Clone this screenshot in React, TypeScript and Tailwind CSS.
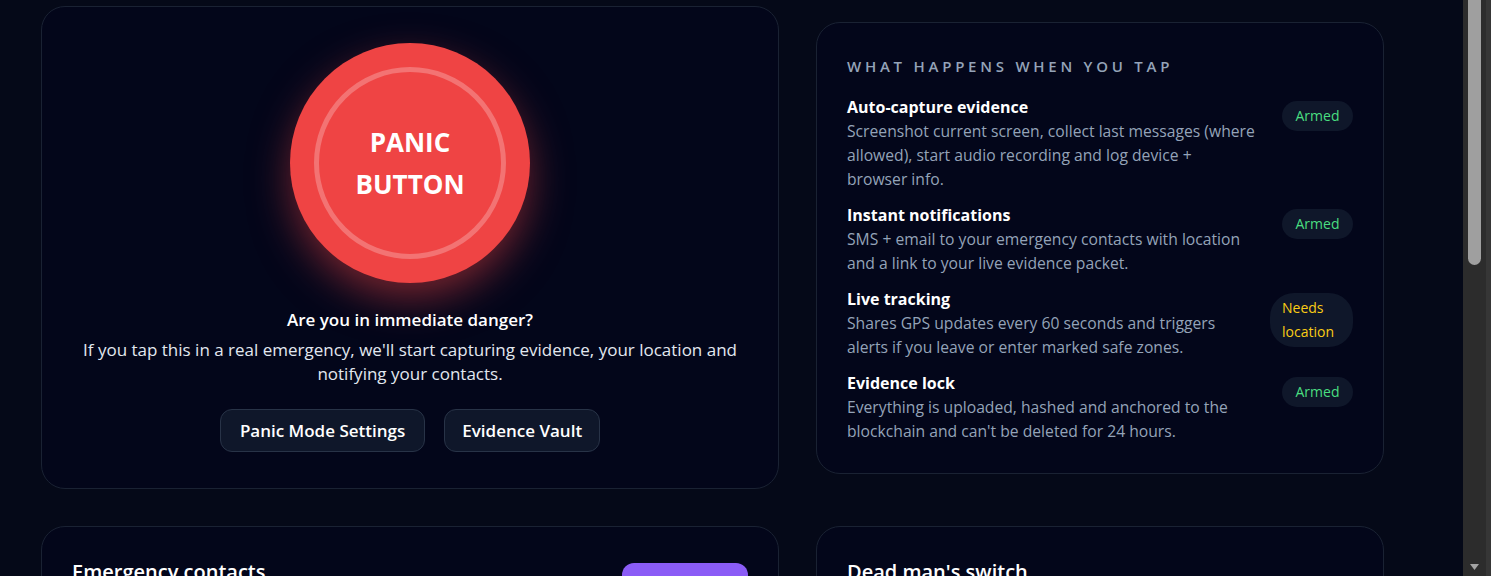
import { Phone, Mail, Plus, Timer } from 'lucide-react';

type Step = {
  title: string;
  desc: string;
  status: 'armed' | 'needs';
  label: string;
};

const steps: Step[] = [
  {
    title: 'Auto-capture evidence',
    desc: 'Screenshot current screen, collect last messages (where allowed), start audio recording and log device + browser\u00a0info.',
    status: 'armed',
    label: 'Armed',
  },
  {
    title: 'Instant notifications',
    desc: 'SMS + email to your emergency contacts with location and a link to your live evidence packet.',
    status: 'armed',
    label: 'Armed',
  },
  {
    title: 'Live tracking',
    desc: 'Shares GPS updates every 60 seconds and triggers alerts if you leave or enter marked safe zones.',
    status: 'needs',
    label: 'Needs location',
  },
  {
    title: 'Evidence lock',
    desc: "Everything is uploaded, hashed and anchored to the blockchain and can't be deleted for 24 hours.",
    status: 'armed',
    label: 'Armed',
  },
];

const contacts = [
  { name: 'Maya Thompson', relation: 'Sister', phone: '+1 (415) 555-0134', email: 'maya.t@example.com' },
  { name: 'Daniel Ortiz', relation: 'Friend', phone: '+1 (415) 555-0178', email: 'd.ortiz@example.com' },
  { name: 'Priya Nair', relation: 'Colleague', phone: '+1 (628) 555-0112', email: 'priya.nair@example.com' },
];

export default function App() {
  return (
    <div
      className="h-screen flex overflow-hidden bg-[#050918] text-slate-100"
      style={{ fontFamily: '"Open Sans", "Noto Sans", sans-serif' }}
    >
      <div className="flex-1 min-w-0 overflow-hidden pl-[41px] pt-[6px]">
        <div className="w-[1343px] grid grid-cols-[738px_568px] gap-x-[37px] gap-y-[37px] items-center">
          {/* Panic button card */}
          <div className="bg-[#03061a] border border-[#1a2233] rounded-3xl p-9 flex flex-col items-center">
            <button className="w-[240px] h-[240px] rounded-full bg-[#ef4444] flex items-center justify-center shadow-[0_16px_44px_-4px_rgba(239,68,68,0.55)] cursor-pointer">
              <div className="w-[192px] h-[192px] rounded-full border-[5px] border-white/25 flex items-center justify-center">
                <span className="text-white text-[26px] font-bold leading-[42px] text-center">
                  PANIC
                  <br />
                  BUTTON
                </span>
              </div>
            </button>

            <h3 className="mt-[25px] text-[17px] font-semibold text-white leading-6">Are you in immediate danger?</h3>
            <p className="mt-[6px] text-[17px] leading-6 text-[#e2e8f0] text-center">
              If you tap this in a real emergency, we'll start capturing evidence, your location and notifying your
              contacts.
            </p>

            <div className="mt-[23px] flex gap-[19px]">
              <button className="h-[43px] px-[19px] rounded-xl bg-[#0f172a] border border-[#283347] text-white text-[17px] font-semibold">
                Panic Mode Settings
              </button>
              <button className="h-[43px] px-[17px] rounded-xl bg-[#0f172a] border border-[#283347] text-white text-[17px] font-semibold">
                Evidence Vault
              </button>
            </div>
          </div>

          {/* What happens card */}
          <div className="bg-[#03061a] border border-[#1a2233] rounded-3xl p-[30px]">
            <h4 className="pt-[3px] text-[15px] font-semibold tracking-[0.25em] text-[#94a3b8] leading-5">
              WHAT HAPPENS WHEN YOU TAP
            </h4>
            <div className="mt-[19px] flex flex-col gap-3">
              {steps.map((s) => (
                <div key={s.title} className="flex items-start justify-between gap-5">
                  <div>
                    <div className="text-base font-bold text-white leading-6">{s.title}</div>
                    <div className="text-[15.7px] text-[#94a3b8] leading-6">{s.desc}</div>
                  </div>
                  <span
                    className={`mt-[6px] shrink-0 rounded-3xl bg-[#0f172a] px-3 py-[3px] text-sm leading-6 ${
                      s.status === 'armed' ? 'text-[#4ade80] w-[71px] text-center' : 'text-[#facc15] w-[83px]'
                    }`}
                  >
                    {s.label}
                  </span>
                </div>
              ))}
            </div>
          </div>

          {/* Emergency contacts */}
          <div className="self-start bg-[#03061a] border border-[#1a2233] rounded-3xl p-[30px]">
            <div className="flex items-start justify-between">
              <div>
                <h3 className="text-xl font-semibold text-white leading-7 pt-[1px]">Emergency contacts</h3>
                <p className="text-sm text-[#94a3b8] leading-6">These people are alerted the moment you tap.</p>
              </div>
              <button className="mt-[6px] h-[40px] w-[126px] rounded-xl bg-[#8b5cf6] text-white text-sm font-semibold flex items-center justify-center gap-1.5">
                <Plus className="w-4 h-4" />
                Add contact
              </button>
            </div>
            <div className="mt-6 flex flex-col gap-3">
              {contacts.map((c) => (
                <div key={c.name} className="rounded-2xl border border-[#1a2233] bg-[#0a1020] p-4 flex justify-between items-center">
                  <div>
                    <div className="text-base font-semibold text-white">{c.name}</div>
                    <div className="text-sm text-[#94a3b8]">{c.relation}</div>
                  </div>
                  <div className="text-sm text-slate-300 flex flex-col gap-1 items-end">
                    <span className="flex items-center gap-1.5"><Phone className="w-3.5 h-3.5" />{c.phone}</span>
                    <span className="flex items-center gap-1.5"><Mail className="w-3.5 h-3.5" />{c.email}</span>
                  </div>
                </div>
              ))}
            </div>
          </div>

          {/* Dead man's switch */}
          <div className="self-start bg-[#03061a] border border-[#1a2233] rounded-3xl p-[30px]">
            <h3 className="text-xl font-semibold text-white leading-7 pt-[1px]">Dead man's switch</h3>
            <p className="text-sm text-[#94a3b8] leading-6">
              If you don't check in before the timer ends, Panic Mode triggers automatically.
            </p>
            <div className="mt-6 rounded-2xl border border-[#1a2233] bg-[#0a1020] p-5 flex items-center gap-4">
              <Timer className="w-8 h-8 text-violet-400" />
              <div>
                <div className="text-2xl font-semibold text-white">02:00:00</div>
                <div className="text-sm text-[#94a3b8]">Check-in interval</div>
              </div>
            </div>
            <button className="mt-5 w-full h-[44px] rounded-xl bg-[#0f172a] border border-[#283347] text-white text-base font-semibold">
              Start timer
            </button>
          </div>
        </div>
      </div>

      {/* Scrollbar */}
      <div className="w-[28px] shrink-0 flex">
        <div className="w-[23px] bg-[#2c2c2c] flex flex-col">
          <div className="ml-[5px] w-[13px] h-[265px] bg-[#9f9f9f] rounded-b-[7px]" />
          <div className="flex-1" />
          <svg className="ml-[7px] mb-[6px]" width="9" height="6" viewBox="0 0 9 6">
            <path d="M0 0 L9 0 L4.5 6 Z" fill="#a3a3a3" />
          </svg>
        </div>
        <div className="w-[5px] bg-[#363636]" />
      </div>
    </div>
  );
}
